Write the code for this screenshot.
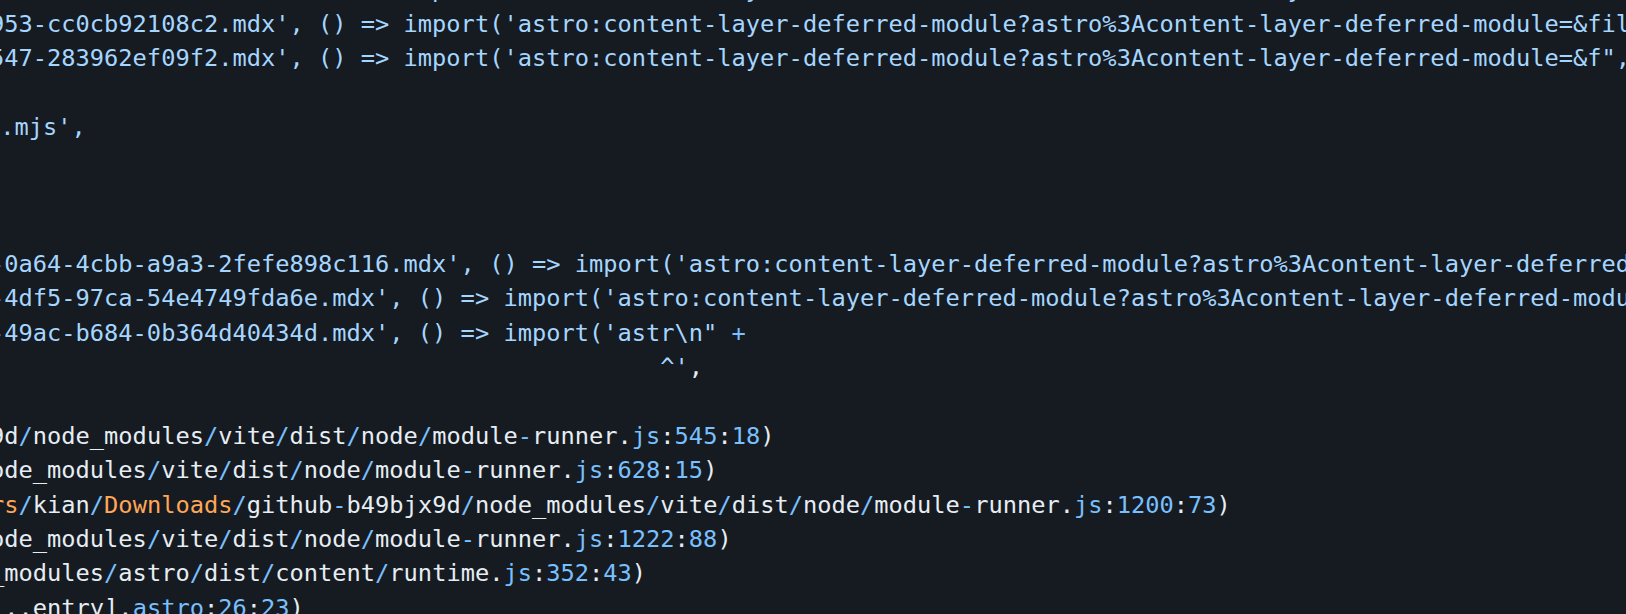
const STRING = "#a5d6ff";

const lines: { text: string; kind: "str" | "path" | "blank" | "caret" | "tail"; shift?: string }[] = [
  {
    kind: "str",
    text: "4f1-6b2e90d7a3c5.mdx', () => import('astro:content-layer-deferred-module?astro%3Acontent-layer-deferred-module=&file",
  },
  {
    kind: "str",
    text: "953-cc0cb92108c2.mdx', () => import('astro:content-layer-deferred-module?astro%3Acontent-layer-deferred-module=&file=",
  },
  {
    kind: "str",
    text: "547-283962ef09f2.mdx', () => import('astro:content-layer-deferred-module?astro%3Acontent-layer-deferred-module=&f\",",
  },
  { kind: "blank", text: " " },
  { kind: "str", text: "s.mjs',", shift: "ml-[-4px]" },
  { kind: "blank", text: " " },
  { kind: "blank", text: " " },
  { kind: "blank", text: " " },
  {
    kind: "str",
    text: "-0a64-4cbb-a9a3-2fefe898c116.mdx', () => import('astro:content-layer-deferred-module?astro%3Acontent-layer-deferred-module=",
  },
  {
    kind: "str",
    text: "-4df5-97ca-54e4749fda6e.mdx', () => import('astro:content-layer-deferred-module?astro%3Acontent-layer-deferred-module=&f",
  },
  { kind: "tail", text: "-49ac-b684-0b364d40434d.mdx', () => import('astr\\n\"" },
  { kind: "caret", text: "^'" },
  { kind: "blank", text: " " },
  { kind: "path", text: "9d/node_modules/vite/dist/node/module-runner.js:545:18)" },
  { kind: "path", text: "ode_modules/vite/dist/node/module-runner.js:628:15)" },
  {
    kind: "path",
    text: "rs/kian/Downloads/github-b49bjx9d/node_modules/vite/dist/node/module-runner.js:1200:73)",
  },
  { kind: "path", text: "ode_modules/vite/dist/node/module-runner.js:1222:88)" },
  { kind: "path", text: "_modules/astro/dist/content/runtime.js:352:43)" },
  { kind: "path", text: "...entry].astro:26:23)" },
];

function paint(text: string) {
  const parts = text.split(/(\/|-|(?<=\.)js|(?<=:)\d+|Downloads|^rs|(?<=\.)astro)/);
  return parts.map((part, i) => {
    if (i % 2 === 0) return <span key={i}>{part}</span>;
    const orange = part === "Downloads" || part === "rs";
    return (
      <span key={i} className={orange ? "text-[#ffa657]" : "text-[#79c0ff]"}>
        {part}
      </span>
    );
  });
}

function Line({ line }: { line: (typeof lines)[number] }) {
  if (line.kind === "path")
    return <div className="text-[#e6edf3]">{paint(line.text)}</div>;
  if (line.kind === "tail")
    return (
      <div className="text-[#a5d6ff]">
        {line.text} <span className="text-[#79c0ff]">+</span>
      </div>
    );
  if (line.kind === "caret")
    return (
      <div>
        <span className="text-[#a5d6ff]">{" ".repeat(47) + line.text}</span>
        <span className="text-[#e6edf3]">,</span>
      </div>
    );
  return (
    <div className={line.shift} style={{ color: STRING }}>
      {line.text}
    </div>
  );
}

export default function App() {
  return (
    <div className="h-[614px] w-[1626px] overflow-hidden bg-[#161b22]">
      <div className="ml-[-10px] mt-[-27.8px] whitespace-pre font-['DejaVu_Sans_Mono',monospace] text-[23.7px] leading-[34.36px]">
        {lines.map((line, i) => (
          <Line key={i} line={line} />
        ))}
      </div>
    </div>
  );
}
